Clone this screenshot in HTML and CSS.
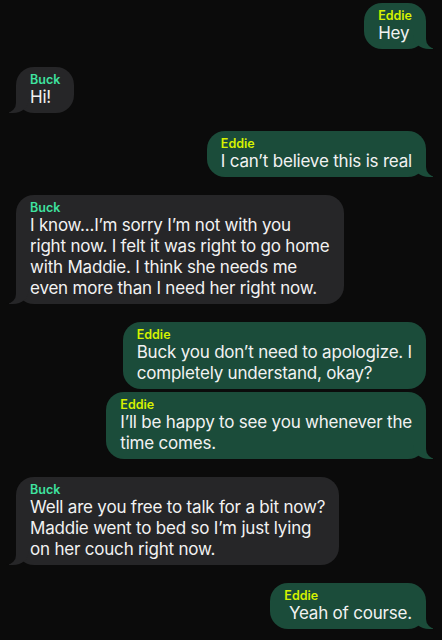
FILE: index.html
```html
<!DOCTYPE html>
<html lang="en">
<head>
  <meta charset="UTF-8">
  <meta name="viewport" content="width=device-width, initial-scale=1.0">
  <title>Messages</title>
  <link rel="stylesheet" href="styles.css">
</head>
<body>
  <div class="thread">
    <div class="msg me tail">
      <div class="name">Eddie</div>
      <div class="text">Hey</div>
    </div>

    <div class="msg them tail">
      <div class="name">Buck</div>
      <div class="text">Hi!</div>
    </div>

    <div class="msg me tail">
      <div class="name">Eddie</div>
      <div class="text">I can’t believe this is real</div>
    </div>

    <div class="msg them tail">
      <div class="name">Buck</div>
      <div class="text">I know...I’m sorry I’m not with you<br>right now. I felt it was right to go home<br>with Maddie. I think she needs me<br>even more than I need her right now.</div>
    </div>

    <div class="msg me grouped">
      <div class="name">Eddie</div>
      <div class="text">Buck you don’t need to apologize. I<br>completely understand, okay?</div>
    </div>
    <div class="msg me tail">
      <div class="name">Eddie</div>
      <div class="text">I’ll be happy to see you whenever the<br>time comes.</div>
    </div>

    <div class="msg them tail">
      <div class="name">Buck</div>
      <div class="text">Well are you free to talk for a bit now?<br>Maddie went to bed so I’m just lying<br>on her couch right now.</div>
    </div>

    <div class="msg me tail">
      <div class="name">Eddie</div>
      <div class="text">&nbsp;Yeah of course.</div>
    </div>
  </div>
</body>
</html>
```

FILE: styles.css
```css
body {
  margin: 0;
  background: #0b0b0b;
  font-family: Inter, "Noto Sans", sans-serif;
  color: #f2f2f2;
}

.thread {
  display: flex;
  flex-direction: column;
  gap: 18px;
  padding: 3px 16px 10px;
}

.msg {
  position: relative;
  max-width: 340px;
  padding: 5px 14px 5px 14px;
  border-radius: 18px;
}

.msg.grouped {
  margin-bottom: -15px;
}

.me {
  align-self: flex-end;
  background: #1b4c3a;
}

.them {
  align-self: flex-start;
  background: #262628;
}

.name {
  font-size: 12.5px;
  line-height: 15px;
  font-weight: 600;
}

.me .name {
  color: #d6f200;
}

.them .name {
  color: #3fe3a0;
}

.text {
  font-size: 17px;
  line-height: 21px;
  letter-spacing: -0.2px;
  white-space: nowrap;
}

/* bubble tails */
.tail::before,
.tail::after {
  content: "";
  position: absolute;
  bottom: 0;
  height: 20px;
}

.me.tail::before {
  right: -7px;
  width: 20px;
  background: #1b4c3a;
  border-bottom-left-radius: 16px 14px;
}

.me.tail::after {
  right: -26px;
  width: 26px;
  background: #0b0b0b;
  border-bottom-left-radius: 10px;
}

.them.tail::before {
  left: -7px;
  width: 20px;
  background: #262628;
  border-bottom-right-radius: 16px 14px;
}

.them.tail::after {
  left: -26px;
  width: 26px;
  background: #0b0b0b;
  border-bottom-right-radius: 10px;
}
```
